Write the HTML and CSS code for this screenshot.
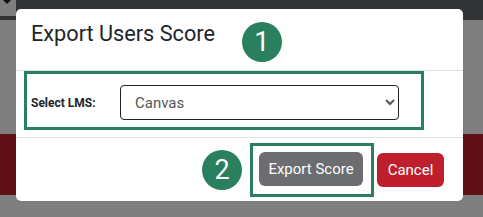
FILE: index.html
```html
<!DOCTYPE html>
<html>
<head>
    <title>Export Users Score</title>
    <link rel="stylesheet" href="styles.css">
</head>
<body>
    <div class="topbar">
        <div class="toggle"><span class="caret"></span></div>
    </div>
    <div class="band"></div>

    <div class="modal">
        <div class="modal-header">
            <h2 class="modal-title">Export Users Score</h2>
            <span class="step step-1">1</span>
        </div>
        <div class="modal-body">
            <div class="highlight lms-row">
                <label for="lms">Select LMS:</label>
                <select id="lms">
                    <option>Canvas</option>
                    <option>Moodle</option>
                    <option>Blackboard</option>
                </select>
            </div>
        </div>
        <div class="modal-footer">
            <span class="step">2</span>
            <div class="highlight btn-wrap">
                <button class="btn btn-export">Export Score</button>
            </div>
            <button class="btn btn-cancel">Cancel</button>
        </div>
    </div>
</body>
</html>
```

FILE: styles.css
```css
body {
    margin: 0;
    font-family: Roboto, "Liberation Sans", Arial, sans-serif;
    background: #7f7f7f;
    height: 217px;
    overflow: hidden;
    position: relative;
}

.topbar {
    height: 20px;
    background: #323335;
}

.toggle {
    width: 16px;
    height: 16px;
    background: #7f7f7f;
    position: relative;
}

.caret {
    position: absolute;
    left: 3px;
    top: 0;
    border-left: 4px solid transparent;
    border-right: 4px solid transparent;
    border-top: 4px solid #111;
}

.band {
    margin-top: 114px;
    height: 61px;
    background: #5e1016;
}

.modal {
    position: absolute;
    left: 16px;
    top: 9px;
    width: 447px;
    background: #fff;
    border-radius: 5px;
}

.modal-header {
    display: flex;
    align-items: flex-start;
    height: 61px;
    padding-left: 15px;
    border-bottom: 1px solid #dee2e6;
}

.modal-title {
    margin: 12px 0 0;
    font-size: 21.7px;
    font-weight: 400;
    line-height: 26px;
    color: #212529;
}

.step {
    display: flex;
    align-items: center;
    justify-content: center;
    width: 40px;
    height: 40px;
    border-radius: 50%;
    background: #2a7f5e;
    color: #fff;
    font-size: 27px;
    flex-shrink: 0;
}

.step-1 {
    margin: 13px 0 0 27px;
}

.highlight {
    border: 3px solid #2a7f5e;
}

.modal-body {
    padding: 0 8px 7px;
}

.lms-row {
    width: 390px;
    display: flex;
    align-items: center;
    padding: 11px 0 7px 4px;
}

.lms-row label {
    width: 89px;
    font-size: 12px;
    font-weight: bold;
    color: #212529;
}

.lms-row select {
    width: 279px;
    height: 35px;
    border: 1px solid #222;
    border-radius: 4px;
    background: #fff;
    padding: 0 8px 0 10px;
    font-family: inherit;
    font-size: 15px;
    color: #555;
}

.modal-footer {
    display: flex;
    align-items: center;
    justify-content: flex-end;
    padding: 5px 19px 4px 0;
    border-top: 1px solid #dee2e6;
}

.modal-footer .step {
    margin-right: 8px;
}

.btn-wrap {
    padding: 6px 8px 8px 6px;
    display: flex;
    margin-right: 3px;
}

.btn {
    height: 34px;
    border: none;
    border-radius: 6px;
    color: #fff;
    font-family: inherit;
    font-size: 15px;
    padding: 0;
    white-space: nowrap;
}

.btn-export {
    width: 104px;
    background: #6c6d70;
}

.btn-cancel {
    width: 67px;
    background: #bf1f2d;
}
```
